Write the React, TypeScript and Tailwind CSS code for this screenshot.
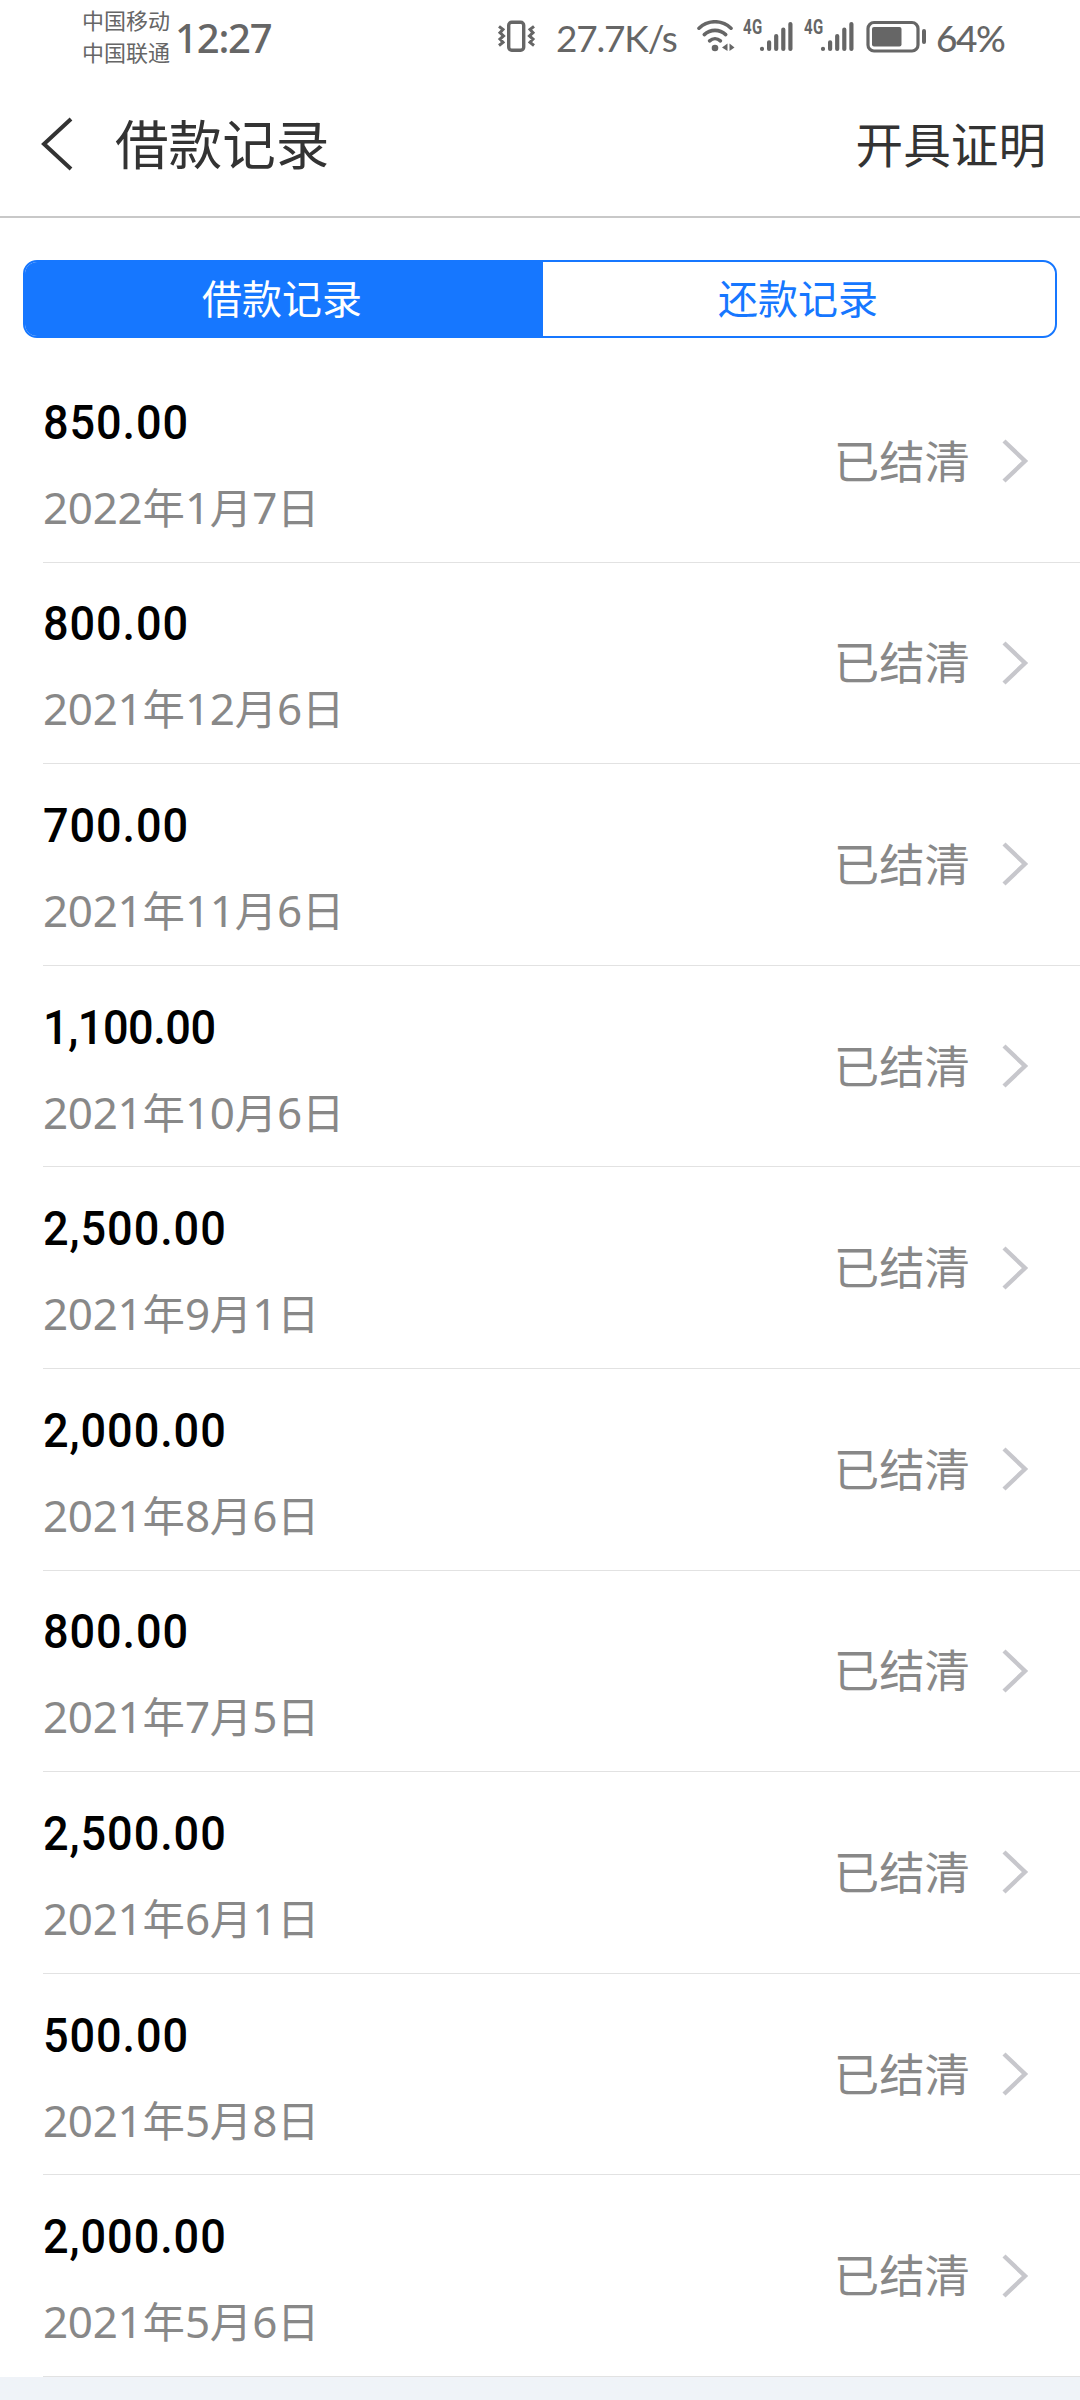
interface LoanRecord {
  amount: string;
  date: string;
}

const records: LoanRecord[] = [
  { amount: '850.00', date: '2022年1月7日' },
  { amount: '800.00', date: '2021年12月6日' },
  { amount: '700.00', date: '2021年11月6日' },
  { amount: '1,100.00', date: '2021年10月6日' },
  { amount: '2,500.00', date: '2021年9月1日' },
  { amount: '2,000.00', date: '2021年8月6日' },
  { amount: '800.00', date: '2021年7月5日' },
  { amount: '2,500.00', date: '2021年6月1日' },
  { amount: '500.00', date: '2021年5月8日' },
  { amount: '2,000.00', date: '2021年5月6日' },
];

function VibrateIcon() {
  return (
    <svg width="40" height="34" viewBox="-2 0 40 34" fill="none" stroke="#666" className="shrink-0">
      <rect x="9.7" y="2.2" width="15" height="28" rx="3" strokeWidth="3.4" />
      <path d="M0 6.3l4 3.2-3 3.2 3.5 3.2-3.5 3.2 3 3.2-4 3.2M35 6.3l-4 3.2 3 3.2-3.5 3.2 3.5 3.2-3 3.2 4 3.2" strokeWidth="3" />
    </svg>
  );
}

function WifiIcon() {
  return (
    <svg width="40" height="34" viewBox="0 0 40 34" fill="none" stroke="#666" strokeLinecap="round" className="shrink-0">
      <path d="M3 8.2C12-0.4 26-0.4 35 8.2" strokeWidth="3.6" />
      <path d="M8.3 14.6c6-5.6 15.4-5.6 21.4 0" strokeWidth="3.6" />
      <path d="M13.6 20.8c3.2-2.8 7.6-2.8 10.8 0" strokeWidth="3.6" />
      <circle cx="19" cy="28" r="3.3" fill="#666" stroke="none" />
      <path d="M31.5 23.5v7.5l-5.5-3.5zM33.5 23.5v7.5l5-3.5z" fill="#666" stroke="none" />
    </svg>
  );
}

function SignalIcon() {
  return (
    <div className="relative h-[34px] w-[52px] shrink-0">
      <span className="absolute top-0 left-[1px] origin-left scale-x-75 font-[Roboto] text-[20px] leading-[15px] font-bold tracking-[0.5px]">
        4G
      </span>
      <svg width="52" height="34" viewBox="0 0 52 34" stroke="#666" strokeWidth="4.2" strokeLinecap="round">
        <path d="M20 28.8v.2M27.1 22.3v6.7M34.2 16v13M41.3 9.5V29M48.4 4v25" />
      </svg>
    </div>
  );
}

function BatteryIcon() {
  return (
    <svg width="62" height="34" viewBox="0 0 62 34" fill="none" stroke="#666" className="shrink-0">
      <rect x="2" y="2.5" width="50" height="28.5" rx="6" strokeWidth="3.2" />
      <rect x="6" y="7" width="29.5" height="19.5" rx="2" fill="#666" stroke="none" />
      <path d="M58 11v11" strokeWidth="4" strokeLinecap="round" />
    </svg>
  );
}

function StatusBar() {
  return (
    <div className="flex h-[72px] items-start text-[#666]">
      <div className="ml-[82px] pt-[3px] text-[22px] leading-8">
        <div>中国移动</div>
        <div>中国联通</div>
      </div>
      <span className="ml-[5px] w-[100px] pt-[14px] font-['Noto_Sans'] text-[40px] leading-[48px] font-medium tracking-[-1.2px]">
        12:27
      </span>
      <div className="ml-[222px] flex pt-5">
        <VibrateIcon />
        <span className="-mt-1 ml-[19px] w-[140px] font-[Lato] text-[37px] leading-[44px] tracking-[-1.2px]">27.7K/s</span>
        <WifiIcon />
        <div className="ml-[6px] flex gap-[9px]">
          <SignalIcon />
          <SignalIcon />
        </div>
        <div className="ml-[11px]">
          <BatteryIcon />
        </div>
        <span className="-mt-1 ml-[8px] font-[Lato] text-[37px] leading-[44px] font-medium tracking-[-1.5px]">64%</span>
      </div>
    </div>
  );
}

function AmountText({ value }: { value: string }) {
  const tracking = value.includes('1') ? 'tracking-[-0.5px]' : 'tracking-[1px]';
  return (
    <div className={`origin-left scale-x-92 font-[Roboto] text-[49px] leading-[56px] font-medium text-black ${tracking}`}>
      {value}
    </div>
  );
}

function DateText({ value }: { value: string }) {
  // Digits are set slightly larger than the characters between them
  return (
    <div className="flex h-[52px] items-baseline text-[42.4px] leading-[52px] text-[#888]">
      {value.split(/(\d+)/).filter(Boolean).map((part, i) =>
        /\d/.test(part) ? (
          <span key={i} className="font-['Noto_Sans'] text-[44px] tracking-[-0.3px]">{part}</span>
        ) : (
          <span key={i}>{part}</span>
        )
      )}
    </div>
  );
}

function RecordRow({ record }: { record: LoanRecord }) {
  return (
    <div className="ml-[43px] flex h-[201.6px] items-center justify-between border-b border-[#e2e2e2] pr-[51px]">
      <div className="flex flex-col gap-[29px] pt-[4px]">
        <AmountText value={record.amount} />
        <DateText value={record.date} />
      </div>
      <div className="flex items-center gap-[31px]">
        <span className="-mt-[5px] text-[45.4px] leading-[60px] text-[#888]">已结清</span>
        <svg width="28" height="44" viewBox="0 0 28 44" fill="none" stroke="#c7c7cc" strokeWidth="4.4">
          <path d="M3 2l21 20L3 42" />
        </svg>
      </div>
    </div>
  );
}

export default function App() {
  return (
    <div className="h-[2400px] w-[1080px] overflow-hidden bg-[#eff3f8] font-['Noto_Sans_CJK_SC',sans-serif]">
      <div className="bg-white">
        <StatusBar />

        {/* Title bar */}
        <div className="flex h-[146px] items-center border-b-2 border-[#c8c8c8] pr-[34px] text-[#333]">
          <svg width="34" height="54" viewBox="0 0 34 54" fill="none" stroke="#333" strokeWidth="4" className="ml-[40px]">
            <path d="M31 2L4 27l27 25" />
          </svg>
          <h1 className="-mt-[5px] ml-[41px] text-[53.6px] leading-[72px]">借款记录</h1>
          <button className="-mt-[2px] ml-auto text-[47.6px] leading-[64px]">开具证明</button>
        </div>

        {/* Tabs */}
        <div className="px-[23px] pt-[42px] pb-[23px]">
          <div className="flex h-[78px] overflow-hidden rounded-[14px] border-2 border-[#1677ff] text-[40px]">
            <button className="w-[518px] bg-[#1677ff] pr-[4px] pb-[4px] text-white">借款记录</button>
            <button className="flex-1 pr-[2px] pb-[4px] text-[#1677ff]">还款记录</button>
          </div>
        </div>

        <div>
          {records.map((record) => (
            <RecordRow key={record.date} record={record} />
          ))}
        </div>
      </div>
    </div>
  );
}
